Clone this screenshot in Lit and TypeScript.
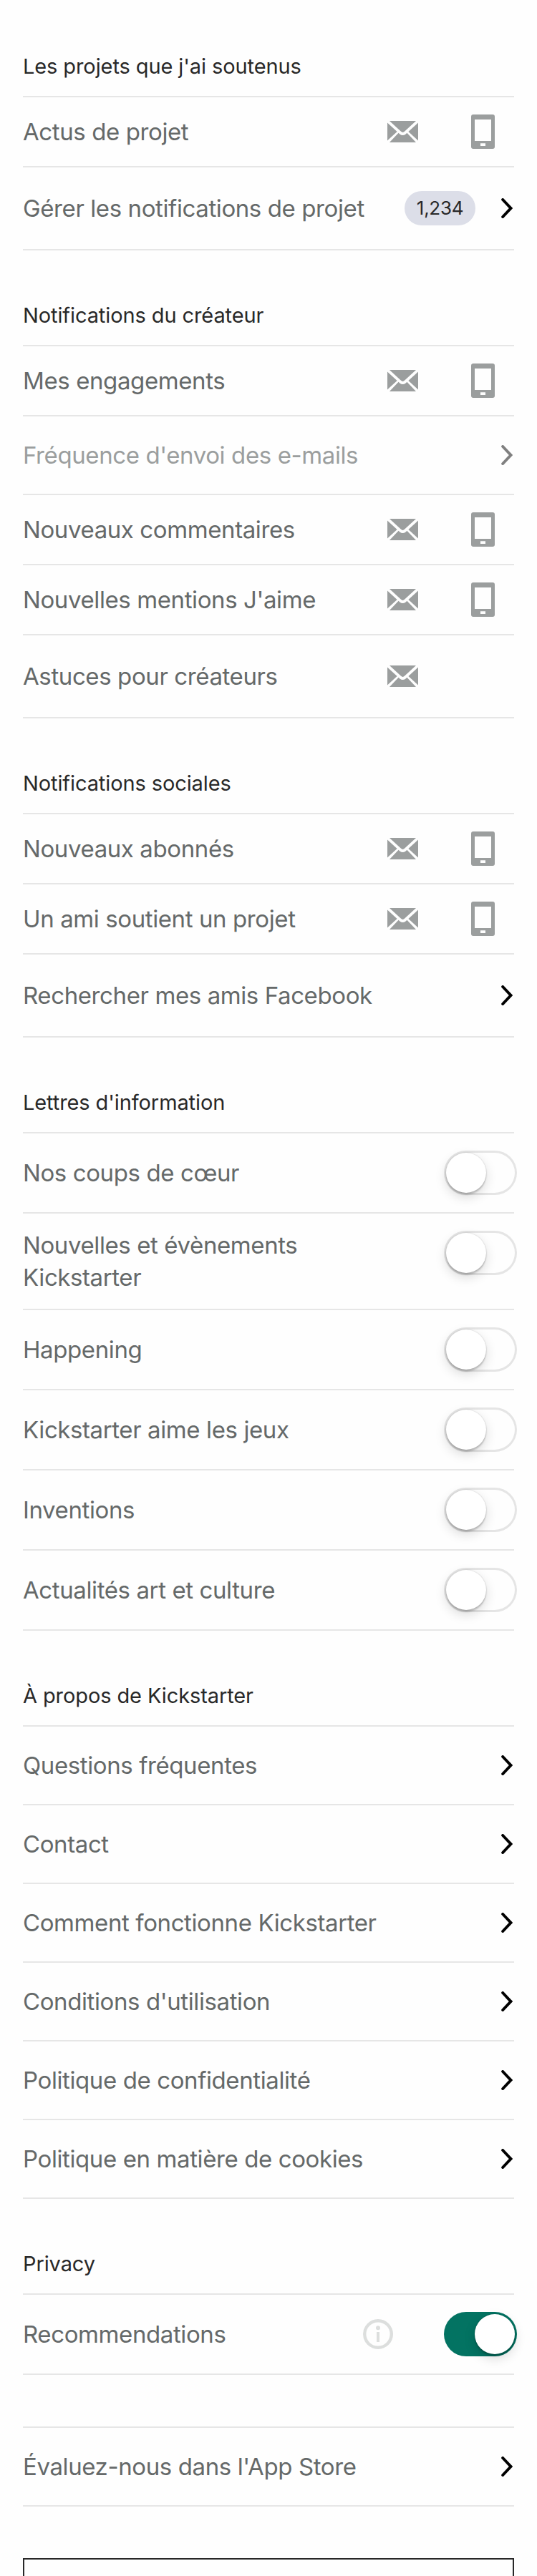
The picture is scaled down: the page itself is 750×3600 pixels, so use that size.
import { LitElement, html, css, nothing } from "lit";
import { customElement, property } from "lit/decorators.js";

type Kind = "both" | "mail" | "link" | "toggle" | "info";
interface Row { label: string; kind: Kind; tall?: boolean; badge?: string; disabled?: boolean; }
interface Section { title?: string; rows: Row[]; }

const link = (label: string, extra: Partial<Row> = {}): Row => ({ label, kind: "link", ...extra });
const both = (label: string): Row => ({ label, kind: "both" });
const toggle = (label: string): Row => ({ label, kind: "toggle" });

const SECTIONS: Section[] = [
  { title: "Les projets que j'ai soutenus", rows: [both("Actus de projet"), link("Gérer les notifications de projet", { badge: "1,234", tall: true })] },
  { title: "Notifications du créateur", rows: [both("Mes engagements"), link("Fréquence d'envoi des e-mails", { disabled: true }), both("Nouveaux commentaires"), both("Nouvelles mentions J'aime"), { label: "Astuces pour créateurs", kind: "mail", tall: true }] },
  { title: "Notifications sociales", rows: [both("Nouveaux abonnés"), both("Un ami soutient un projet"), link("Rechercher mes amis Facebook", { tall: true })] },
  { title: "Lettres d'information", rows: [toggle("Nos coups de cœur"), toggle("Nouvelles et évènements Kickstarter"), toggle("Happening"), toggle("Kickstarter aime les jeux"), toggle("Inventions"), toggle("Actualités art et culture")] },
  { title: "À propos de Kickstarter", rows: [link("Questions fréquentes"), link("Contact"), link("Comment fonctionne Kickstarter"), link("Conditions d'utilisation"), link("Politique de confidentialité"), link("Politique en matière de cookies")] },
  { title: "Privacy", rows: [{ label: "Recommendations", kind: "info" }] },
  { rows: [link("Évaluez-nous dans l'App Store")] },
];

const mailIcon = html`<svg width="43" height="30" viewBox="0 0 43 30">
  <path fill="#9b9e9e" d="M3 0H40L24.2 14.6Q21.5 17.2 18.8 14.6ZM0 2.6L13.6 15L0 27.6ZM43 2.6L29.4 15L43 27.6ZM15.6 16.8L17.4 18.4Q21.5 21.6 25.6 18.4L27.4 16.8L40 30H3Z"/>
</svg>`;
const phoneIcon = html`<svg width="33" height="48" viewBox="0 0 33 48">
  <path fill="#9b9e9e" fill-rule="evenodd" d="M3 0H30Q33 0 33 3V45Q33 48 30 48H3Q0 48 0 45V3Q0 0 3 0ZM5 7V37H28V7ZM13 40.2V44H20V40.2Z"/>
</svg>`;
const chevron = html`<svg width="16" height="28" viewBox="0 0 16 28">
  <path d="M2.2 2L13.4 14L2.2 26" fill="none" stroke="currentColor" stroke-width="4" stroke-linecap="round"/>
</svg>`;
const infoIcon = html`<svg width="42" height="42" viewBox="0 0 42 42" fill="#dcdedd">
  <circle cx="21" cy="21" r="18.8" fill="none" stroke="#dcdedd" stroke-width="4.4"/>
  <circle cx="21" cy="12.3" r="3"/><rect x="19" y="18" width="4" height="14"/>
</svg>`;

@customElement("settings-switch")
export class SettingsSwitch extends LitElement {
  @property({ type: Boolean, reflect: true }) on = false;
  static styles = css`
    :host { display: flex; box-sizing: border-box; width: 102px; height: 62px; padding: 3px; border-radius: 31px; box-shadow: inset 0 0 0 3px #e5e5e5; }
    :host([on]) { background: #037362; box-shadow: none; justify-content: flex-end; }
    .knob { width: 56px; height: 56px; border-radius: 50%; background: #fff; box-shadow: 0 6px 16px rgba(0,0,0,.15), 0 3px 2px rgba(0,0,0,.16), 0 0 2px rgba(0,0,0,.2); }
  `;
  render() { return html`<div class="knob"></div>`; }
}

@customElement("app-root")
export class AppRoot extends LitElement {
  static styles = css`
    :host { display: block; box-sizing: border-box; height: 3600px; overflow: hidden; background: #fefefe; padding: 60px 32px 0; font-family: Inter, "Noto Sans", sans-serif; }
    .section { display: flex; flex-direction: column; }
    .title { box-sizing: border-box; height: 74px; padding-top: 15px; font-size: 29px; line-height: 36px; letter-spacing: -0.1px; color: #282828; white-space: nowrap; }
    .gap { height: 58px; }
    .gap.untitled { height: 72px; }
    .rows { border-top: 2px solid #e6e6e6; }
    .row { display: flex; align-items: center; box-sizing: border-box; height: 110px; border-bottom: 2px solid #e6e6e6; color: #656969; }
    .row.both { height: 98px; }
    .row.tall { height: 116px; }
    .row.toggle, .row.info { height: auto; min-height: 112px; }
    .label { flex: 1; font-size: 33px; line-height: 44.5px; letter-spacing: -0.4px; white-space: nowrap; }
    .toggle .label { padding: 22px 84px 22px 0; white-space: normal; }
    .disabled .label { color: #9b9e9e; }
    .end { display: flex; align-items: center; color: #000; }
    .disabled .end { color: #808080; }
    .toggle .end { align-self: flex-start; margin: 24px -4px 0 0; }
    .info .end { margin-right: -4px; gap: 71px; }
    .both .end { gap: 74px; margin-right: 27px; }
    .mail .end { margin-right: 134px; }
    .link .end { margin-right: 2px; gap: 36px; }
    .badge { box-sizing: border-box; width: 99px; height: 48px; border-radius: 24px; background: #dcdee8; color: #282828; font-size: 26px; line-height: 48px; text-align: center; letter-spacing: -0.3px; }
    .button { margin-top: 72px; height: 96px; border: 2px solid #282828; }
  `;
  private end(r: Row) {
    switch (r.kind) {
      case "both": return html`${mailIcon}${phoneIcon}`;
      case "mail": return mailIcon;
      case "toggle": return html`<settings-switch></settings-switch>`;
      case "info": return html`${infoIcon}<settings-switch on></settings-switch>`;
      default: return html`${r.badge ? html`<span class="badge">${r.badge}</span>` : nothing}${chevron}`;
    }
  }
  render() {
    return html`${SECTIONS.map((s, i) => html`
      ${i ? html`<div class="gap ${s.title ? "" : "untitled"}"></div>` : nothing}
      <section class="section">
        ${s.title ? html`<div class="title">${s.title}</div>` : nothing}
        <div class="rows">${s.rows.map(r => html`
          <div class="row ${r.kind} ${r.tall ? "tall" : ""} ${r.disabled ? "disabled" : ""}">
            <span class="label">${r.label}</span><span class="end">${this.end(r)}</span>
          </div>`)}</div>
      </section>`)}
      <div class="button"></div>`;
  }
}
